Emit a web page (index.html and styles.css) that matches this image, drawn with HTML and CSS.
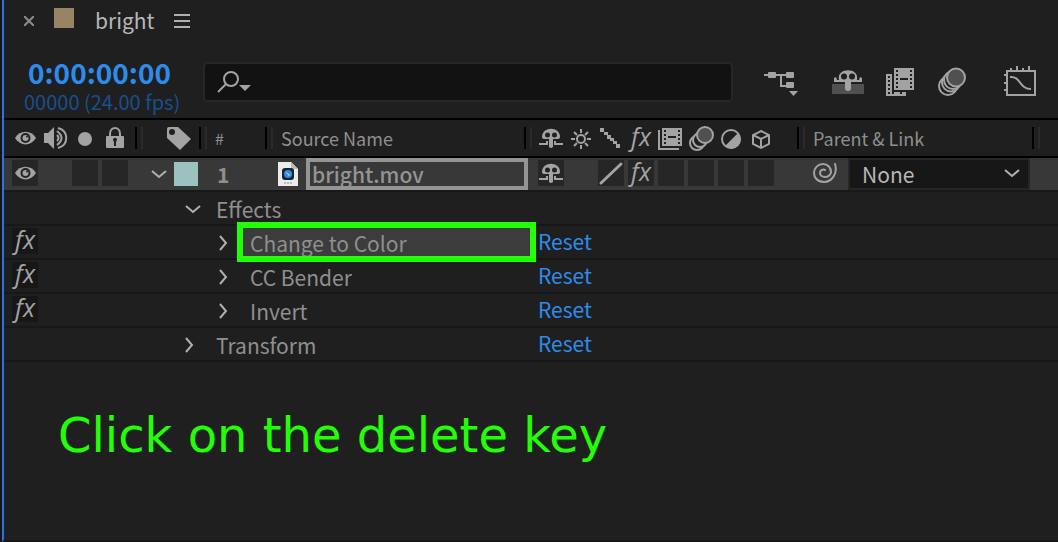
FILE: index.html
```
<!DOCTYPE html>
<html lang="en">
<head>
    <meta charset="UTF-8">
    <meta name="viewport" content="width=device-width, initial-scale=1.0">
    <title>bright</title>
    <link rel="stylesheet" href="styles.css">
</head>
<body>
    <!-- shared icons -->
    <svg class="icon-defs" aria-hidden="true">
        <symbol id="eye" viewBox="0 0 26 26">
            <path d="M3 13C8 4.500 19 4.500 24 13C19 21.500 8 21.500 3 13Z" fill="#a3a3a3"/>
            <circle cx="13.500" cy="13" r="5" fill="#222"/>
            <circle cx="13.500" cy="13" r="3" fill="#a3a3a3"/>
            <circle cx="15" cy="11.500" r="1" fill="#222"/>
        </symbol>
        <symbol id="shy" viewBox="0 0 26 26">
            <path d="M4 12C4 1 22 1 22 12Q22 14 19 14H7Q4 14 4 12Z" fill="#a3a3a3"/>
            <circle cx="9.500" cy="10" r="2.500" fill="#222"/>
            <circle cx="16.500" cy="10" r="2.500" fill="#222"/>
            <path d="M11 12h4v10q-2 2-4 0Z" fill="#a3a3a3"/>
            <path d="M1 19h8v-3M25 19h-8v-3" fill="none" stroke="#a3a3a3" stroke-width="2"/>
        </symbol>
        <symbol id="down" viewBox="0 0 16 16">
            <path d="M1 5l7 6l7-6" fill="none" stroke="#b0b0b0" stroke-width="2"/>
        </symbol>
        <symbol id="right" viewBox="0 0 16 16">
            <path d="M1 1l6 7l-6 7" fill="none" stroke="#b0b0b0" stroke-width="2"/>
        </symbol>
    </svg>

    <main class="panel">
        <div class="tab-bar">
            <button class="plain-btn close-btn" aria-label="Close tab">
                <svg width="10" height="10" viewBox="0 0 10 10"><path d="M0 0l10 10M10 0L0 10" stroke="#8c8c8c" stroke-width="2"/></svg>
            </button>
            <span class="comp-swatch"></span>
            <span class="tab-name">bright</span>
            <button class="plain-btn" aria-label="Panel menu">
                <svg width="16" height="14" viewBox="0 0 16 14"><path d="M0 1h16M0 7h16M0 13h16" stroke="#b0b0b0" stroke-width="2"/></svg>
            </button>
        </div>

        <div class="toolbar">
            <div class="time">
                <div class="timecode">0:00:00:00</div>
                <div class="frames">00000 (24.00 fps)</div>
            </div>
            <label class="search">
                <svg width="34" height="24" viewBox="0 0 34 24">
                    <circle cx="14" cy="9" r="7" fill="none" stroke="#a3a3a3" stroke-width="2"/>
                    <path d="M9 14l-8 8" stroke="#a3a3a3" stroke-width="2"/>
                    <path d="M22 15h12l-6 6Z" fill="#a3a3a3"/>
                </svg>
                <input type="text" aria-label="Search">
            </label>
            <div class="tools">
                <button class="plain-btn tool-flow" aria-label="Mini-flowchart">
                    <svg width="36" height="32" viewBox="0 0 36 32">
                        <path d="M0 9h26M17 9v11h6" fill="none" stroke="#a3a3a3" stroke-width="2"/>
                        <rect x="4" y="6" width="8" height="6" rx="1" fill="#a3a3a3"/>
                        <rect x="22" y="6" width="8" height="6" rx="1" fill="#a3a3a3"/>
                        <rect x="22" y="16" width="8" height="6" rx="1" fill="#a3a3a3"/>
                        <path d="M25 25h9l-4.500 5Z" fill="#a3a3a3"/>
                    </svg>
                </button>
                <button class="plain-btn" aria-label="Hide shy layers">
                    <svg width="32" height="32" viewBox="0 0 32 32">
                        <rect x="0" y="18" width="32" height="10" fill="#505050"/>
                        <path d="M2 16v-4l2-1 1 3h2C4 1 28 1 25 14h2l1-3 2 1v4Z" fill="#a3a3a3"/>
                        <circle cx="12" cy="10.500" r="3" fill="#1f1f1f"/>
                        <circle cx="20" cy="10.500" r="3" fill="#1f1f1f"/>
                        <rect x="13" y="13" width="6" height="12" rx="3" fill="#a3a3a3"/>
                    </svg>
                </button>
                <button class="plain-btn" aria-label="Frame blending">
                    <svg width="28" height="32" viewBox="0 0 28 32">
                        <path d="M0 8h6v18h14v4H0Z" fill="#a3a3a3"/>
                        <path d="M3 10v18" stroke="#1f1f1f" stroke-width="2" stroke-dasharray="2 2"/>
                        <path d="M6 27h12" stroke="#1f1f1f" stroke-width="2" stroke-dasharray="2 6"/>
                        <rect x="8" y="2" width="20" height="22" fill="#a3a3a3"/>
                        <path d="M11 4v18M25 4v18" stroke="#1f1f1f" stroke-width="2" stroke-dasharray="2 2"/>
                        <path d="M14 13h8" stroke="#1f1f1f" stroke-width="2"/>
                    </svg>
                </button>
                <button class="plain-btn" aria-label="Motion blur">
                    <svg width="30" height="32" viewBox="0 0 30 32">
                        <g fill="#1f1f1f" stroke="#a3a3a3" stroke-width="2">
                            <circle cx="12" cy="20" r="9"/>
                            <circle cx="15" cy="16.500" r="9"/>
                            <circle cx="17" cy="14" r="9"/>
                            <circle cx="20" cy="11.500" r="9" fill="#505050"/>
                        </g>
                    </svg>
                </button>
                <button class="plain-btn tool-graph" aria-label="Graph editor">
                    <svg width="34" height="32" viewBox="0 0 34 32">
                        <g fill="none" stroke="#a3a3a3" stroke-width="2">
                            <rect x="3" y="5" width="28" height="24"/>
                            <path d="M7 2v3M13 0v5M19 2v3M25 0v5M0 9h3M0 17h3M0 24h3"/>
                            <path d="M6 11C17 10 15 23 27 23"/>
                        </g>
                    </svg>
                </button>
            </div>
        </div>

        <table class="layers">
            <colgroup>
                <col class="col-av">
                <col class="col-label">
                <col class="col-num">
                <col class="col-source">
                <col class="col-switches">
                <col class="col-parent">
                <col>
            </colgroup>
            <thead>
                <tr>
                    <th aria-label="A/V features">
                        <div class="head-cell slots">
                            <span class="slot"><svg width="26" height="26"><use href="#eye"/></svg></span>
                            <span class="slot">
                                <svg width="26" height="26" viewBox="0 0 26 26">
                                    <path d="M2 8h4l6-6v22l-6-6H2Z" fill="#a3a3a3"/>
                                    <path d="M15 10q3 3 0 6M15 6q9 7 0 14M16 3c11 3 11 17 0 20" fill="none" stroke="#a3a3a3" stroke-width="2"/>
                                </svg>
                            </span>
                            <span class="slot"><svg width="26" height="26" viewBox="0 0 26 26"><circle cx="13" cy="14" r="7" fill="#a3a3a3"/></svg></span>
                            <span class="slot">
                                <svg width="26" height="26" viewBox="0 0 26 26">
                                    <path d="M8 12V9c0-8 10-8 10 0v3" fill="none" stroke="#a3a3a3" stroke-width="2"/>
                                    <rect x="4" y="11" width="18" height="12" rx="1" fill="#a3a3a3"/>
                                    <path d="M11 15c0-3 4-3 4 0l-1 2v4h-2v-4Z" fill="#1f1f1f"/>
                                </svg>
                            </span>
                        </div>
                    </th>
                    <th aria-label="Label">
                        <div class="head-cell label-head">
                            <svg width="26" height="26" viewBox="0 0 26 26">
                                <path d="M1 4q0-2 2-2h9L25 14L14 25L1 13Z" fill="#a3a3a3"/>
                                <circle cx="6" cy="7" r="3" fill="#1f1f1f"/>
                            </svg>
                        </div>
                    </th>
                    <th><div class="head-cell num-head">#</div></th>
                    <th><div class="head-cell">Source Name</div></th>
                    <th aria-label="Switches">
                        <div class="head-cell slots">
                            <span class="slot"><svg width="26" height="26"><use href="#shy"/></svg></span>
                            <span class="slot">
                                <svg width="26" height="26" viewBox="0 0 26 26">
                                    <g fill="none" stroke="#a3a3a3" stroke-width="2">
                                        <circle cx="13" cy="14" r="4"/>
                                        <path d="M13 4v4M13 20v4M3 14h4M19 14h4M6 7l3 3M17 18l3 3M20 7l-3 3M9 18l-3 3"/>
                                    </g>
                                </svg>
                            </span>
                            <span class="slot">
                                <svg width="26" height="26" viewBox="0 0 26 26">
                                    <path d="M2 3h4v4H2ZM6 7h4v3H6ZM9 10h4v4H9ZM12 13h4v3h-4ZM15 16h4v3h-4ZM18 19h4v4h-4Z" fill="#a3a3a3"/>
                                </svg>
                            </span>
                            <span class="slot fx">fx</span>
                            <span class="slot">
                                <svg width="26" height="26" viewBox="0 0 26 26">
                                    <path d="M1 5v19h20" fill="none" stroke="#a3a3a3" stroke-width="2"/>
                                    <rect x="4" y="3" width="20" height="18" fill="#a3a3a3"/>
                                    <path d="M7 5v14M21 5v14" stroke="#1f1f1f" stroke-width="2" stroke-dasharray="2 2"/>
                                    <path d="M10 12h8" stroke="#1f1f1f" stroke-width="2"/>
                                </svg>
                            </span>
                            <span class="slot">
                                <svg width="26" height="26" viewBox="0 0 26 26">
                                    <g fill="#1f1f1f" stroke="#a3a3a3" stroke-width="2">
                                        <circle cx="9" cy="18" r="7"/>
                                        <circle cx="12" cy="15" r="7"/>
                                        <circle cx="17" cy="10" r="8" fill="#505050"/>
                                    </g>
                                </svg>
                            </span>
                            <span class="slot">
                                <svg width="26" height="26" viewBox="0 0 26 26">
                                    <circle cx="13" cy="14" r="9" fill="none" stroke="#a3a3a3" stroke-width="2"/>
                                    <path d="M20 8L7 21A9 9 0 0 0 20 8Z" fill="#a3a3a3"/>
                                </svg>
                            </span>
                            <span class="slot">
                                <svg width="26" height="26" viewBox="0 0 26 26">
                                    <path d="M13 6l8 4v9l-8 4l-8-4v-9ZM5 10l8 4l8-4M13 14v9" fill="none" stroke="#a3a3a3" stroke-width="2"/>
                                </svg>
                            </span>
                        </div>
                    </th>
                    <th><div class="head-cell">Parent &amp; Link</div></th>
                    <th aria-hidden="true"></th>
                </tr>
            </thead>
            <tbody>
                <tr class="layer">
                    <td>
                        <div class="slots">
                            <span class="slot box"><svg width="26" height="26"><use href="#eye"/></svg></span>
                            <span class="slot"></span>
                            <span class="slot box"></span>
                            <span class="slot box"></span>
                        </div>
                    </td>
                    <td>
                        <div class="label-cell">
                            <button class="plain-btn" aria-label="Collapse layer"><svg width="16" height="16"><use href="#down"/></svg></button>
                            <span class="label-swatch"></span>
                        </div>
                    </td>
                    <td class="layer-num">1</td>
                    <td>
                        <div class="source-cell">
                            <svg width="20" height="24" viewBox="0 0 20 24">
                                <path d="M0 0h13l7 7v17H0Z" fill="#ececec"/>
                                <path d="M13 0v7h7Z" fill="#bdbdbd"/>
                                <rect x="4" y="6" width="12" height="12" rx="3" fill="#1d232b"/>
                                <circle cx="10" cy="12" r="4" fill="#2a8cf0"/>
                                <path d="M7 9l5 4l-1 1Z" fill="#cfe6ff"/>
                                <path d="M6 21h8" stroke="#8a8a8a" stroke-width="1" stroke-dasharray="2 1"/>
                            </svg>
                            <input class="source-name" type="text" value="bright.mov" aria-label="Layer name">
                        </div>
                    </td>
                    <td>
                        <div class="slots">
                            <span class="slot box"><svg width="26" height="26"><use href="#shy"/></svg></span>
                            <span class="slot"></span>
                            <span class="slot box"><svg width="26" height="26" viewBox="0 0 26 26"><path d="M3 23L23 4" stroke="#a3a3a3" stroke-width="3" stroke-linecap="round"/></svg></span>
                            <span class="slot box fx">fx</span>
                            <span class="slot box"></span>
                            <span class="slot box"></span>
                            <span class="slot box"></span>
                            <span class="slot box"></span>
                        </div>
                    </td>
                    <td>
                        <div class="parent-cell">
                            <svg width="26" height="26" viewBox="0 0 26 26">
                                <path d="M23 3C26 12 20 21 12 21C5 21 2 16 2 12C2 7 6 3 11 3C16 3 19 7 19 11C19 14 16 16 13 16C10 16 8 14 8 12C8 9 11 8 13 9" fill="none" stroke="#a3a3a3" stroke-width="2" stroke-linecap="round"/>
                            </svg>
                            <div class="select-wrap">
                                <select aria-label="Parent layer"><option>None</option></select>
                                <svg width="16" height="16"><use href="#down"/></svg>
                            </div>
                        </div>
                    </td>
                    <td></td>
                </tr>
                <tr>
                    <td></td>
                    <td colspan="3">
                        <div class="prop">
                            <button class="plain-btn" aria-label="Collapse Effects"><svg width="16" height="16"><use href="#down"/></svg></button>
                            <span class="prop-name">Effects</span>
                        </div>
                    </td>
                    <td colspan="3"></td>
                </tr>
                <tr>
                    <td><div class="slots"><span class="slot box-dark fx">fx</span></div></td>
                    <td colspan="3">
                        <div class="prop child">
                            <button class="plain-btn" aria-label="Expand Change to Color"><svg width="16" height="16"><use href="#right"/></svg></button>
                            <span class="prop-name selected">Change to Color</span>
                        </div>
                    </td>
                    <td colspan="3"><a class="reset" href="#">Reset</a></td>
                </tr>
                <tr>
                    <td><div class="slots"><span class="slot box-dark fx">fx</span></div></td>
                    <td colspan="3">
                        <div class="prop child">
                            <button class="plain-btn" aria-label="Expand CC Bender"><svg width="16" height="16"><use href="#right"/></svg></button>
                            <span class="prop-name">CC Bender</span>
                        </div>
                    </td>
                    <td colspan="3"><a class="reset" href="#">Reset</a></td>
                </tr>
                <tr>
                    <td><div class="slots"><span class="slot box-dark fx">fx</span></div></td>
                    <td colspan="3">
                        <div class="prop child">
                            <button class="plain-btn" aria-label="Expand Invert"><svg width="16" height="16"><use href="#right"/></svg></button>
                            <span class="prop-name">Invert</span>
                        </div>
                    </td>
                    <td colspan="3"><a class="reset" href="#">Reset</a></td>
                </tr>
                <tr>
                    <td></td>
                    <td colspan="3">
                        <div class="prop">
                            <button class="plain-btn" aria-label="Expand Transform"><svg width="16" height="16"><use href="#right"/></svg></button>
                            <span class="prop-name">Transform</span>
                        </div>
                    </td>
                    <td colspan="3"><a class="reset" href="#">Reset</a></td>
                </tr>
            </tbody>
        </table>

        <p class="caption">Click on the delete key</p>
    </main>
</body>
</html>
```
FILE: styles.css
```
* {
    box-sizing: border-box;
}
body {
    margin: 0;
    padding-left: 2px;
    background: #141414;
    color: #8f8f8f;
    font-family: "Noto Sans CJK SC", "Noto Sans", sans-serif;
    font-size: 21px;
    line-height: 32px;
}
svg {
    display: block;
    flex: none;
}
.icon-defs {
    position: absolute;
    width: 0;
    height: 0;
}
.panel {
    min-height: 100vh;
    border-left: 2px solid #2b74e0;
    border-bottom: 2px solid #161616;
    background: #1f1f1f;
}
.plain-btn {
    flex: none;
    padding: 0;
    border: none;
    background: none;
    cursor: pointer;
}

/* tab */
.tab-bar {
    display: flex;
    align-items: center;
    gap: 20px;
    height: 42px;
    padding: 0 20px;
}
.comp-swatch {
    width: 20px;
    height: 20px;
    margin-bottom: 6px;
    background: #978464;
}
.tab-name {
    padding: 0 0 2px 1px;
    color: #b8b8b8;
}

/* toolbar */
.toolbar {
    display: flex;
    align-items: center;
    height: 78px;
    padding: 4px 20px 0 20px;
    border-bottom: 2px solid #000;
}
.time {
    flex: none;
    width: 179px;
    padding-top: 8px;
}
.timecode {
    padding-left: 4px;
    color: #2d8ceb;
    font-size: 28px;
    font-weight: bold;
    line-height: 32px;
}
.frames {
    color: #17508c;
    font-size: 20px;
    line-height: 28px;
}
.search {
    flex: 1;
    display: flex;
    align-items: center;
    height: 40px;
    margin-right: 31px;
    padding: 0 12px;
    border: 2px solid #262626;
    border-radius: 5px;
    background: #121212;
}
.search input {
    flex: 1;
    min-width: 0;
    border: none;
    outline: none;
    background: none;
    color: #b8b8b8;
    font: inherit;
}
.tools {
    display: flex;
    gap: 22px;
}
.tool-flow {
    margin-right: 10px;
}
.tool-graph {
    margin-left: 16px;
}

/* layer list */
.layers {
    width: 100%;
    table-layout: fixed;
    border-collapse: separate;
    border-spacing: 0;
}
.col-av {
    width: 137px;
}
.col-label {
    width: 64px;
}
.col-num {
    width: 66px;
}
.col-source {
    width: 259px;
}
.col-switches {
    width: 273px;
}
.col-parent {
    width: 235px;
}
th,
td {
    padding: 0;
    text-align: left;
    vertical-align: top;
}
th {
    border-bottom: 2px solid #000;
    font-size: 18px;
    font-weight: normal;
}
td {
    height: 34px;
    border-bottom: 2px solid #181818;
}
.head-cell {
    display: flex;
    align-items: center;
    height: 36px;
    margin-right: -2px;
    padding-left: 10px;
}
.head-cell::after {
    content: "";
    width: 4px;
    height: 22px;
    margin-left: auto;
    border-left: 2px solid #000;
    border-right: 2px solid #2a2a2a;
}
.label-head {
    padding-left: 25px;
}
.slots {
    display: flex;
    gap: 4px;
    padding-left: 8px;
}
td .slots {
    padding-top: 2px;
}
.slot {
    flex: none;
    width: 26px;
    height: 26px;
}
.box {
    background: #262626;
}
.box-dark {
    background: #171717;
}
.fx {
    color: #a3a3a3;
    font-family: "Open Sans", sans-serif;
    font-size: 25px;
    font-style: italic;
    line-height: 22px;
    text-align: center;
}
.layer td {
    background: #383838;
}
.label-cell {
    display: flex;
    align-items: center;
    gap: 7px;
    height: 32px;
    padding-left: 10px;
}
.label-swatch {
    width: 24px;
    height: 24px;
    background: #9bc2be;
}
.layer-num {
    padding-left: 12px;
    font-weight: bold;
}
.num-head {
    font-size: 16px;
}
.source-cell {
    display: flex;
    align-items: center;
    gap: 8px;
    height: 32px;
    padding: 0 2px 0 7px;
}
.source-name {
    flex: 1;
    min-width: 0;
    height: 32px;
    padding: 0 2px;
    border: 4px solid #949494;
    outline: none;
    background: #383838;
    color: #949494;
    font: inherit;
    font-weight: 500;
    line-height: 24px;
}
.parent-cell {
    display: flex;
    align-items: center;
    gap: 10px;
    padding-left: 9px;
}
.select-wrap {
    position: relative;
    flex: 1;
    margin-right: 8px;
}
.select-wrap select {
    display: block;
    width: 100%;
    height: 32px;
    padding: 0 12px;
    border: 2px solid #262626;
    appearance: none;
    background: #171717;
    color: #b8b8b8;
    font: inherit;
    line-height: 28px;
}
.select-wrap svg {
    position: absolute;
    top: 7px;
    right: 10px;
    pointer-events: none;
}
.prop {
    display: flex;
    align-items: center;
    gap: 8px;
    height: 32px;
    padding-left: 44px;
}
.prop .plain-btn {
    padding-top: 2px;
}
.child {
    padding-left: 78px;
}
.prop-name {
    position: relative;
    flex: 1;
    padding: 2px 0 0 7px;
    line-height: 30px;
}
.selected {
    background: #3c3c3c;
}
/* green frame round the selected effect */
.selected::after {
    content: "";
    position: absolute;
    inset: -4px -6px;
    border: 6px solid #22ff06;
}
.reset {
    display: inline-block;
    padding-left: 8px;
    color: #2d8ceb;
    line-height: 30px;
    text-decoration: none;
    vertical-align: top;
}
.caption {
    margin: 41px 54px;
    color: #22ff06;
    font-family: "DejaVu Sans", sans-serif;
    font-size: 48px;
    line-height: 64px;
}
```
